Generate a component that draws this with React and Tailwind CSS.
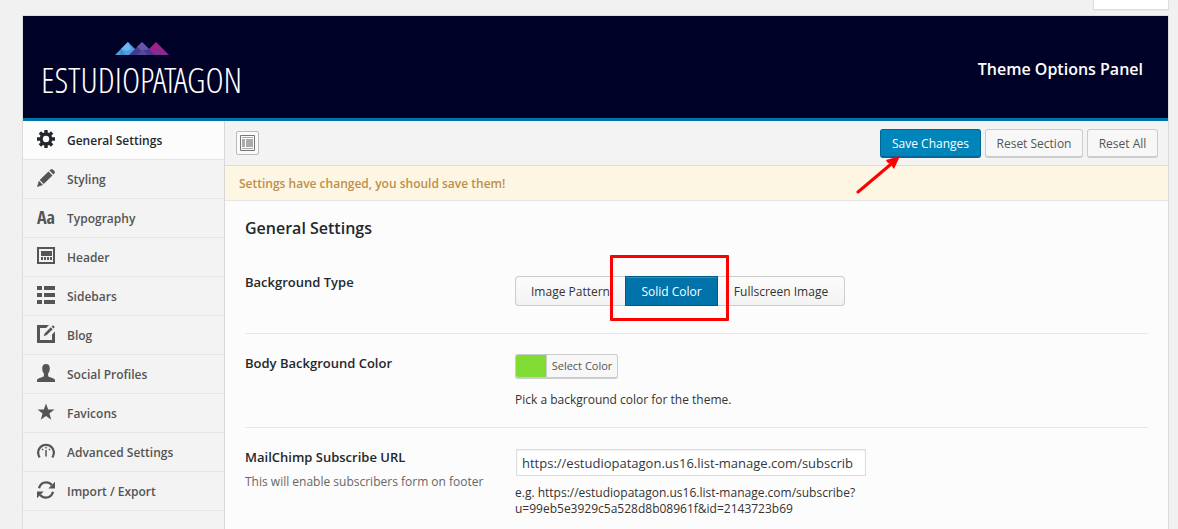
import React, { useState } from 'react';

const GearIcon = () => (
    <svg width="18" height="18" viewBox="0 0 18 18" fill="currentColor" aria-hidden="true">
        <path
            fillRule="evenodd"
            d="M7.3 0h3.4v2.5l1.4.6 1.8-1.8 2.4 2.4-1.8 1.8.6 1.8H18v3.4h-2.9l-.6 1.8 1.8 1.8-2.4 2.4-1.8-1.8-1.4.6V18H7.3v-2.5l-1.4-.6-1.8 1.8-2.4-2.4 1.8-1.8-.6-1.8H0V7.3h2.9l.6-1.8-1.8-1.8 2.4-2.4 1.8 1.8 1.4-.6zM9 5.8a3.2 3.2 0 1 0 0 6.4 3.2 3.2 0 0 0 0-6.4z"
        />
    </svg>
);

const PencilIcon = () => (
    <svg width="18" height="18" viewBox="0 0 18 18" fill="currentColor" aria-hidden="true">
        <path d="M13.4.7a1.8 1.8 0 0 1 2.6 0l1.3 1.3a1.8 1.8 0 0 1 0 2.6l-.9.9-4-3.9zM11.5 2.4l4 4L6.7 15l-4-4zM1.9 11.8l4.1 4.2L0 18z" />
    </svg>
);

const HeaderIcon = () => (
    <svg width="18" height="18" viewBox="0 0 18 18" fill="currentColor" aria-hidden="true">
        <path fillRule="evenodd" d="M0 0h18v17H0zM2 2v13h14V2z" />
        <path d="M4 4h11v5H4zM4 10h2v3H4zM7 10h2v3H7zM10 10h2v3h-2zM13 10h2v3h-2z" />
    </svg>
);

const ListIcon = () => (
    <svg width="18" height="18" viewBox="0 0 18 18" fill="currentColor" aria-hidden="true">
        <path d="M0 0h5v4H0zM7 0h11v4H7zM0 7h5v4H0zM7 7h11v4H7zM0 14h5v4H0zM7 14h11v4H7z" />
    </svg>
);

const EditIcon = () => (
    <svg width="18" height="18" viewBox="0 0 18 18" fill="currentColor" aria-hidden="true">
        <path d="M0 0h12L9.200 3H3v12h12V9.500l3-3V18H0z" />
        <path d="M15.900.2l1.900 1.900-1.300 1.300-1.900-1.900zM13.800 2.300l1.900 1.900-5.900 5.900-3.200 1.200 1.200-3.100z" />
    </svg>
);

const UserIcon = () => (
    <svg width="18" height="18" viewBox="0 0 18 18" fill="currentColor" aria-hidden="true">
        <path d="M9 0c2.4 0 3.8 1.600 3.800 4.200 0 2.300-.6 4-1.700 5.200v2.200c0 .8.5 1.200 1.400 1.500l3.500 1.100c1.400.5 2 1.200 2 2.300V18H0v-1.500c0-1.100.6-1.800 2-2.300l3.500-1.100c.9-.3 1.400-.7 1.400-1.500V9.400C5.800 8.200 5.200 6.500 5.200 4.200 5.200 1.600 6.600 0 9 0z" />
    </svg>
);

const StarIcon = () => (
    <svg width="18" height="18" viewBox="0 0 18 18" fill="currentColor" aria-hidden="true">
        <path d="M9 .5l2.200 6h6.300l-5.100 3.900 1.900 6.300L9 13l-5.300 3.700 1.900-6.300L.5 6.500h6.300z" />
    </svg>
);

const DashboardIcon = () => (
    <svg width="18" height="18" viewBox="0 0 18 18" fill="none" stroke="currentColor" aria-hidden="true">
        <path strokeWidth="2.200" d="M2.600 15.500C.7 12 .6 8.400 2.900 5.700a8.100 8.100 0 0 1 12.200 0c2.300 2.700 2.200 6.300.3 9.800" />
        <path strokeWidth="1.500" d="M9 8v6.500M8.300 5.800h1.500M4.800 7.600h1.500M11.700 7.600h1.500" />
    </svg>
);

const RefreshIcon = () => (
    <svg width="18" height="18" viewBox="0 0 18 18" aria-hidden="true">
        <path fill="none" stroke="currentColor" strokeWidth="2.300" d="M2 7.200C3 3.500 6 1.300 9.200 1.300c2.300 0 4.200 1 5.600 2.800M16 10.800c-1 3.700-4 5.900-7.200 5.900-2.300 0-4.200-1-5.600-2.800" />
        <path fill="currentColor" d="M18 .8v6.700h-6.700zM0 17.200v-6.700h6.700z" />
    </svg>
);

const TypeIcon = () => (
    <span aria-hidden="true" className="font-['Open_Sans_Condensed','Open_Sans',sans-serif] text-[18px] font-bold leading-[18px]">
        Aa
    </span>
);

const menu = [
    { label: 'General Settings', icon: GearIcon },
    { label: 'Styling', icon: PencilIcon },
    { label: 'Typography', icon: TypeIcon },
    { label: 'Header', icon: HeaderIcon },
    { label: 'Sidebars', icon: ListIcon },
    { label: 'Blog', icon: EditIcon },
    { label: 'Social Profiles', icon: UserIcon },
    { label: 'Favicons', icon: StarIcon },
    { label: 'Advanced Settings', icon: DashboardIcon },
    { label: 'Import / Export', icon: RefreshIcon },
];

const Logo = () => (
    <div className="flex flex-col items-center pt-3">
        <svg width="54" height="14" viewBox="0 0 54 14" aria-hidden="true">
            <path fill="#4f9fe0" d="M0 13L13 0l8 8-5 5z" />
            <path fill="#6cb8f0" d="M6 7l7-7 3 7-4 2z" />
            <path fill="#3f86cc" d="M6 7l4 6H5z" />
            <path fill="#a0208c" d="M54 13L41 0l-8 8 4 5z" />
            <path fill="#7c3090" d="M41 6l13 7H41z" />
            <path fill="#433a8e" d="M14 13L27 0l13 13z" />
            <path fill="#6358a8" d="M27 0l7 7-7 2-5-4z" />
            <path fill="#554a9c" d="M27 8l6 5H22z" />
        </svg>
        <span className="font-['Open_Sans_Condensed_Light','Open_Sans_Condensed',sans-serif] text-[35px] font-light leading-[48px] text-white">
            ESTUDIOPATAGON
        </span>
    </div>
);

const Field = ({ title, subtitle, htmlFor, children }) => (
    <div className="flex items-start border-b border-[#e7e7e7] pt-5">
        <div className="w-[270px] shrink-0 text-[13px] leading-[18px]">
            <label htmlFor={htmlFor} className="block font-semibold text-[#23282d]">{title}</label>
            {subtitle && <p className="mt-[7px] text-[12px] text-[#666]">{subtitle}</p>}
        </div>
        <div className="min-w-0 flex-1">{children}</div>
    </div>
);

const backgroundTypes = ['Image Pattern', 'Solid Color', 'Fullscreen Image'];

const App = () => {
    const [active, setActive] = useState('General Settings');
    const [bgType, setBgType] = useState('Solid Color');
    const [url, setUrl] = useState('https://estudiopatagon.us16.list-manage.com/subscribe?u=99eb5e3929c5a528d8b08961f&id=2143723b69');

    return (
        <div className="h-screen overflow-hidden bg-[#f1f1f1] pl-[22px] pr-[9px] font-['Open_Sans','Noto_Sans',sans-serif] text-[13px] text-[#444]">
            {/* Screen meta tab */}
            <div className="-mt-[18px] mb-[5px] flex justify-end">
                <button className="flex h-7 w-[76px] items-start border border-t-0 border-[#ddd] bg-white pl-4 text-[13px] leading-5 text-[#72777c] shadow-[0_1px_1px_rgba(0,0,0,0.04)]">
                    Help ▾
                </button>
            </div>

            <div className="border border-[#dcdcdc] bg-[#fcfcfc]">
                {/* Header */}
                <header className="flex h-[105px] items-center justify-between border-b-[3px] border-[#0074a8] bg-[#000127] pl-[18px] pr-[25px]">
                    <Logo />
                    <h2 className="pt-1 text-[16px] font-semibold text-white">Theme Options Panel</h2>
                </header>

                <div className="flex">
                    {/* Sidebar */}
                    <nav className="min-h-[440px] w-[202px] shrink-0 border-r border-[#d8d8d8] bg-[#f3f3f3]">
                        {menu.map(({ label, icon: Icon }) => (
                            <button
                                key={label}
                                onClick={() => setActive(label)}
                                className={`flex h-[39px] w-full items-center gap-3 border-b border-[#e5e5e5] pl-3.5 text-left text-[12px] font-semibold ${active === label ? 'bg-[#fcfcfc] text-[#23282d]' : 'text-[#555]'}`}
                            >
                                <span className="flex w-[18px] justify-center pb-0.5"><Icon /></span>
                                <span className="pt-0.5">{label}</span>
                            </button>
                        ))}
                    </nav>

                    <main className="min-w-0 flex-1">
                        {/* Action bar */}
                        <div className="flex h-[45px] items-center border-b border-[#dcdcdc] bg-[#f3f3f3] pl-[11px] pr-2.5">
                            <button aria-label="Expand options" className="flex h-6 w-[23px] items-center justify-center rounded-[2px] border border-[#bbb] bg-[#fafafa]">
                                <svg width="15" height="16" viewBox="0 0 15 16" aria-hidden="true">
                                    <path fill="none" stroke="#777" d="M.5.5h14v15H.5z" />
                                    <path fill="#aaa" d="M2 2h11v1H2zM2 4h3v8H2zM6 4h7v8H6zM2 13h11v1H2z" />
                                </svg>
                            </button>
                            <div className="relative ml-auto flex gap-1 text-[12px]">
                                <button className="h-[29px] w-[101px] rounded-[3px] border border-b-2 border-[#006799] bg-[#0085ba] pt-0.5 text-white">Save Changes</button>
                                <button className="h-[29px] w-[98px] rounded-[3px] border border-b-2 border-[#ccc] bg-[#f7f7f7] pt-0.5 text-[#555]">Reset Section</button>
                                <button className="h-[29px] w-[71px] rounded-[3px] border border-b-2 border-[#ccc] bg-[#f7f7f7] pt-0.5 text-[#555]">Reset All</button>
                                <svg className="pointer-events-none absolute -left-6 top-[26px]" width="46" height="40" viewBox="0 0 46 40" aria-hidden="true">
                                    <path stroke="#f00" strokeWidth="3" strokeLinecap="round" d="M2 37L34 10" />
                                    <path fill="#f00" d="M44 1L38 14l-3-4-4-3-1-2z" />
                                </svg>
                            </div>
                        </div>

                        <div className="flex h-[35px] items-center border-b border-[#e5e5e5] bg-[#fdf6e3] pl-3.5 pt-0.5 text-[12px] font-semibold text-[#bd8f4b]">
                            Settings have changed, you should save them!
                        </div>

                        {/* Section */}
                        <section className="px-5 pt-[15px]">
                            <h2 className="text-[16px] font-semibold leading-6 text-[#23282d]">General Settings</h2>

                            <div className="mt-[13px]">
                                <Field title="Background Type">
                                    <div className="mb-[27px] mt-[3px] flex text-[12px]">
                                        {backgroundTypes.map((type, i) => (
                                            <label
                                                key={type}
                                                className={`relative flex h-[30px] cursor-pointer items-center justify-center border pt-0.5 ${['w-[110px] rounded-l-[4px] border-r-0', 'w-[93px]', 'w-[127px] rounded-r-[4px] border-l-0'][i]} ${bgType === type ? 'border-[#005a87] bg-[#0073aa] text-white shadow-[inset_0_1px_0_#0a9be0]' : 'border-[#ccc] bg-linear-to-b from-[#fcfcfc] to-[#f3f3f3] text-[#333]'}`}
                                            >
                                                <input type="radio" name="bg-type" value={type} checked={bgType === type} onChange={() => setBgType(type)} className="sr-only" />
                                                {type}
                                                {bgType === type && <span className="pointer-events-none absolute -bottom-4 -left-4 -right-3 -top-[22px] z-10 rounded-[1px] border-[3px] border-[#f00]" />}
                                            </label>
                                        ))}
                                    </div>
                                </Field>

                                <Field title="Body Background Color" htmlFor="body-bg">
                                    <button id="body-bg" className="flex h-[25px] overflow-hidden rounded-[3px] border border-b-2 border-[#ccc] bg-[#f7f7f7] text-[11px] leading-[22px] text-[#555]">
                                        <span className="h-full w-[31px] border-r border-[#ccc] bg-[#81dd36]" />
                                        <span className="w-[70px] text-center">Select Color</span>
                                    </button>
                                    <p className="mb-[18px] mt-3 text-[12px] leading-[18px] text-[#333]">Pick a background color for the theme.</p>
                                </Field>

                                <Field title="MailChimp Subscribe URL" subtitle="This will enable subscribers form on footer" htmlFor="mailchimp">
                                    <input
                                        id="mailchimp"
                                        type="text"
                                        value={url}
                                        onChange={(e) => setUrl(e.target.value)}
                                        className="ml-px mt-px block h-[27px] w-[350px] border border-[#ddd] bg-white pl-[5px] pr-3 text-[13px] text-[#32373c] shadow-[inset_0_1px_2px_rgba(0,0,0,0.07)] outline-none"
                                    />
                                    <p className="mb-5 mt-[9px] w-[360px] text-[12px] leading-4 text-[#333]">
                                        e.g. https://estudiopatagon.us16.list-manage.com/subscribe?<br />u=99eb5e3929c5a528d8b08961f&amp;id=2143723b69
                                    </p>
                                </Field>
                            </div>
                        </section>
                    </main>
                </div>
            </div>
        </div>
    );
};

export default App;
